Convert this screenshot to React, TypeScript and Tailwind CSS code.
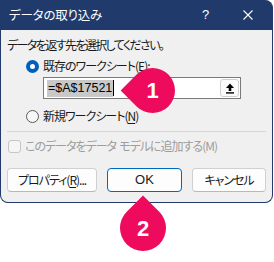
const jp = "font-['Noto_Sans_CJK_JP','Noto_Sans',sans-serif] [font-feature-settings:'palt']";

const U = ({ children }: { children: string }) => <span className="underline underline-offset-2">{children}</span>;

const Drop = ({ n, className }: { n: string; className: string }) => (
  <div className={`absolute ${className}`}>
    <div className="relative w-full h-full">
      <div className="absolute inset-0 bg-[#ee0a5c] rotate-45 rounded-full" />
      <span className="absolute inset-0 flex items-center justify-center text-white font-bold text-[22px] font-['Liberation_Sans',sans-serif]">
        {n}
      </span>
    </div>
  </div>
);

export default function App() {
  return (
    <div className={`relative w-[274px] h-[262px] bg-white overflow-hidden text-[12px] text-[#1a1a1a] ${jp}`}>
      <div className="w-[273px] h-[203px] bg-[#1f3a6b] rounded-tr-[8px] rounded-b-[8px] border-x border-b border-[#1f3a6b] flex flex-col">
        <div className="h-[30px] shrink-0 flex items-center pl-[8px] text-white text-[12.5px] tracking-[-0.2px]">
          <span>データの取り込み</span>
          <span className="ml-auto mr-[34px] font-['Liberation_Sans',sans-serif] text-[13px]">?</span>
          <svg width="10" height="10" viewBox="0 0 10 10" className="mr-[19px]">
            <path d="M0.5 0.5 L9.5 9.5 M9.5 0.5 L0.5 9.5" stroke="white" strokeWidth="1.1" />
          </svg>
        </div>
        <div className="flex-1 bg-[#f0f0f0] rounded-b-[7px] px-[6px] flex flex-col tracking-[-1px]">
          <div className="mt-[7px] h-[16px] leading-[16px] tracking-[-1.6px]">データを返す先を選択してください。</div>
          <div className="mt-[5px] h-[16px] flex items-center pl-[19px]">
            <span className="w-[13px] h-[13px] rounded-full bg-[#005fb8] flex items-center justify-center">
              <span className="w-[5px] h-[5px] rounded-full bg-white" />
            </span>
            <span className="ml-[4px] leading-[16px]">
              既存のワークシート(<U>E</U>):
            </span>
          </div>
          <div className="mt-[3px] ml-[36px] w-[198px] h-[22px] bg-white border border-[#7a7a7a] flex items-center pl-[3px] pr-[1px] tracking-normal">
            <span className="bg-[#c8c8c8] px-[1px] h-[17px] leading-[17px] text-[12.5px] font-['Liberation_Sans',sans-serif] text-black">=$A$17521</span>
            <span className="w-[1px] h-[16px] bg-black" />
            <span className="ml-auto w-[19px] h-[18px] rounded-[3px] border border-[#d0d0d0] bg-[#fbfbfb] flex items-center justify-center">
              <svg width="10" height="11" viewBox="0 0 10 11">
                <path d="M5 0.5 L9 5 H6.3 V8 H3.7 V5 H1 Z" fill="black" />
                <rect x="1" y="9.2" width="8" height="1.4" fill="black" />
              </svg>
            </span>
          </div>
          <div className="mt-[9px] h-[16px] flex items-center pl-[19px]">
            <span className="w-[13px] h-[13px] rounded-full border border-[#5a5a5a] bg-[#f7f7f7]" />
            <span className="ml-[4px] leading-[16px]">
              新規ワークシート(<U>N</U>)
            </span>
          </div>
          <div className="mt-[7px] h-[1px] bg-[#d6d6d6]" />
          <div className="mt-[6px] h-[16px] flex items-center pl-[1px] text-[#9d9d9d]">
            <span className="w-[13px] h-[13px] rounded-[3px] border border-[#c6c6c6] bg-[#f5f5f5]" />
            <span className="ml-[4px] leading-[16px]">
              このデータをデータ<span className="ml-[3px]">モデルに追加する(M)</span>
            </span>
          </div>
          <div className="mt-[14px] flex justify-between">
            <button className="w-[90px] h-[24px] rounded-[4px] border border-[#d0d0d0] border-b-[#b8b8b8] bg-[#fdfdfd] text-[12px]">
              プロパティ(<U>R</U>)...
            </button>
            <button className="w-[75px] h-[24px] rounded-[4px] border border-[#0067c0] bg-[#fdfdfd] text-[13px] tracking-normal font-['Liberation_Sans',sans-serif]">
              OK
            </button>
            <button className="w-[74px] h-[24px] rounded-[4px] border border-[#d0d0d0] border-b-[#b8b8b8] bg-[#fdfdfd] text-[12px]">
              キャンセル
            </button>
          </div>
        </div>
      </div>
      <Drop n="1" className="left-[130px] top-[68px] w-[45px] h-[45px] [&>div>div]:rounded-bl-none" />
      <Drop n="2" className="left-[120px] top-[205px] w-[46px] h-[46px] [&>div>div]:rounded-tl-none" />
    </div>
  );
}
